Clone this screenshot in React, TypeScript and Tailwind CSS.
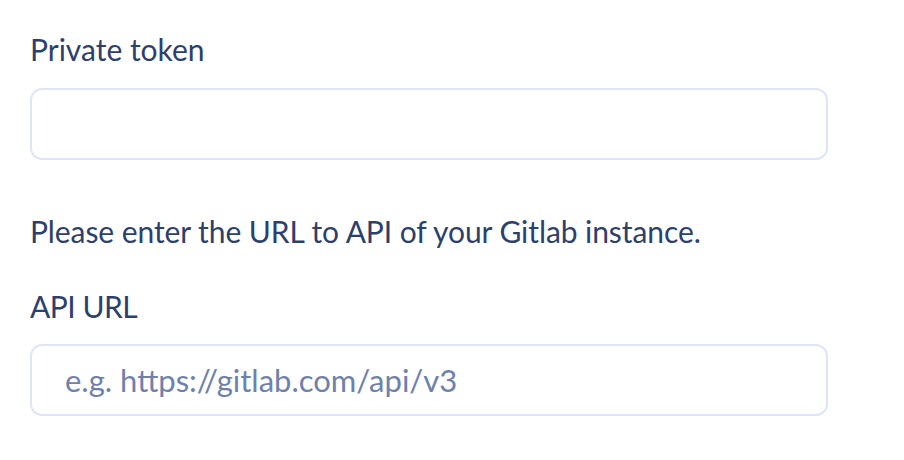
export default function App() {
  return (
    <div className="w-[904px] h-[460px] bg-white font-['Lato',sans-serif] text-[#2d3f6c]">
      <div className="flex flex-col pl-[30px] pt-[31px] w-[828px]">
        <label className="text-[30px] leading-[36px]">Private token</label>
        <input
          type="text"
          className="mt-[21px] h-[72px] rounded-xl border-2 border-[#dfe5f8] px-[33px] text-[30px] outline-none"
        />
        <p className="mt-[53px] text-[30px] leading-[36px] tracking-[-0.08px]">
          Please enter the URL to API of your Gitlab instance.
        </p>
        <label className="mt-[39px] text-[30px] leading-[36px] tracking-[-0.5px]">API URL</label>
        <input
          type="text"
          placeholder="e.g. https://gitlab.com/api/v3"
          className="mt-[20px] h-[72px] rounded-xl border-2 border-[#dfe5f8] px-[33px] text-[31px] outline-none placeholder:text-[#6e81ad]"
        />
      </div>
    </div>
  )
}
